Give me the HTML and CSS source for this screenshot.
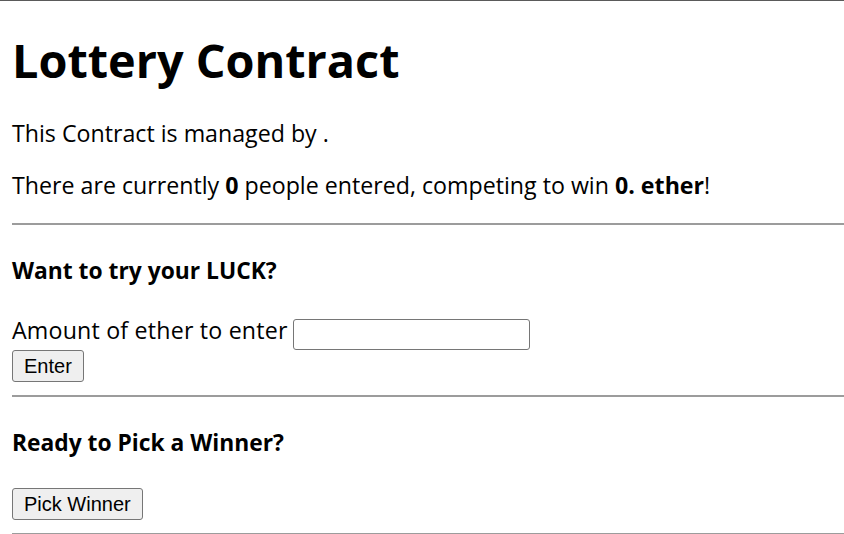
FILE: index.html
```html
<!DOCTYPE html>
<html lang="en">
<head>
<meta charset="utf-8">
<title>Lottery Contract</title>
<link rel="stylesheet" href="styles.css">
</head>
<body>
<div class="app">
  <h1 class="title">Lottery Contract</h1>
  <p class="text">This Contract is managed by .</p>
  <p class="text">There are currently <b>0</b> people entered, competing to win <b>0. ether</b>!</p>
  <hr class="rule">
  <form class="enter-form">
    <h4 class="subtitle">Want to try your LUCK?</h4>
    <div class="field">
      <label class="label" for="amount">Amount of ether to enter</label>
      <input class="input" id="amount" type="text">
    </div>
    <button class="btn" type="button">Enter</button>
  </form>
  <hr class="rule">
  <h4 class="subtitle">Ready to Pick a Winner?</h4>
  <button class="btn" type="button">Pick Winner</button>
  <hr class="rule">
</div>
</body>
</html>
```
FILE: styles.css
```css
html {
  border-top: 1px solid #5a5a5a;
  background: #fff;
}
body {
  margin: 0;
  color: #000;
  font-family: "Open Sans", "Noto Sans", sans-serif;
  font-size: 23.2px;
}
.app {
  padding: 0 0 0 12px;
}
.title {
  font-size: 46.8px;
  font-weight: 700;
  line-height: 55px;
  margin: 32px 0;
  letter-spacing: 0;
}
.text {
  margin: 24px 0;
  line-height: 27.6px;
}
.text b {
  font-weight: 700;
}
.rule {
  margin: 13px 0 12px;
  height: 0;
  border: none;
  border-top: 2px solid #9c9c9c;
}
.enter-form {
  margin: 0;
}
.subtitle {
  font-size: 22.8px;
  font-weight: 700;
  line-height: 27.6px;
  margin: 32px 0;
}
.field {
  display: flex;
  align-items: flex-start;
  gap: 5px;
}
.label {
  line-height: 27.6px;
  letter-spacing: 0.2px;
}
.input {
  box-sizing: border-box;
  width: 237px;
  height: 31px;
  margin: 2px 0 0;
  padding: 0 4px;
  border: 1px solid #767676;
  border-radius: 3px;
  background: #fff;
  font-family: "Liberation Sans", Arial, sans-serif;
  font-size: 20px;
}
.btn {
  display: block;
  box-sizing: border-box;
  height: 32px;
  padding: 0 11px;
  border: 1px solid #767676;
  border-radius: 3px;
  background: #efefef;
  color: #000;
  font-family: "Liberation Sans", Arial, sans-serif;
  font-size: 20px;
  line-height: 30px;
}
```
